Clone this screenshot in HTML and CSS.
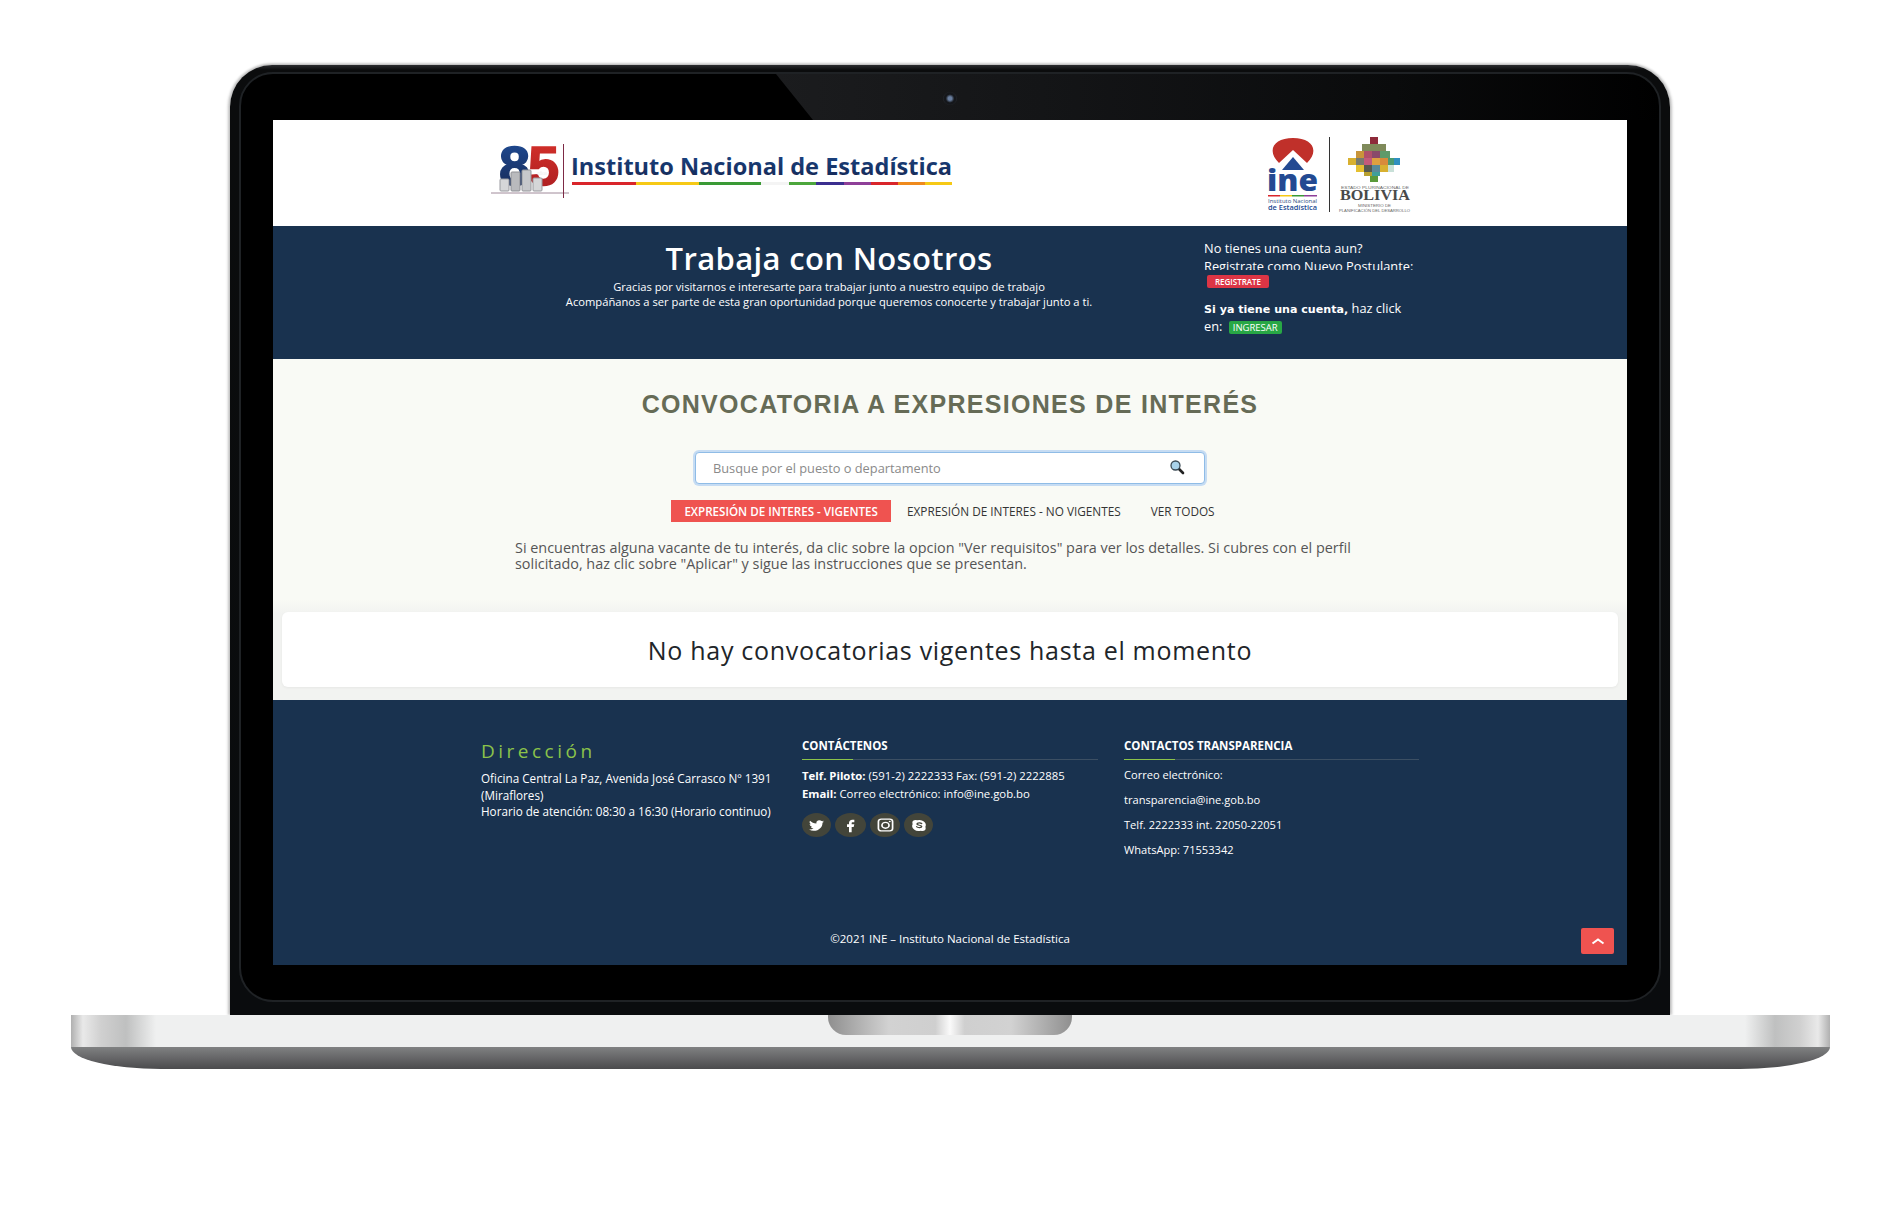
FILE: index.html
```html
<!DOCTYPE html>
<html lang="es">
<head>
<meta charset="utf-8">
<title>Trabaja con Nosotros</title>
<link rel="stylesheet" href="styles.css">
</head>
<body>
<div class="stage">
  <div class="laptop">
    <div class="lid">
      <div class="bezel-line"></div>
      <div class="glare"></div>
      <div class="camera"></div>
      <div class="screen">
        <header class="site-header">
          <svg class="logo-left" viewBox="485 126 475 94" width="475" height="94" aria-label="Instituto Nacional de Estadística">
            <defs>
              <linearGradient id="g8" x1="0" y1="0" x2="0" y2="1"><stop offset="0" stop-color="#1f4e9a"/><stop offset="1" stop-color="#17264f"/></linearGradient>
              <linearGradient id="g5" x1="0" y1="0" x2="0" y2="1"><stop offset="0" stop-color="#d8322b"/><stop offset="1" stop-color="#a81c20"/></linearGradient>
              <linearGradient id="gt" x1="0" y1="0" x2="0" y2="1"><stop offset="0" stop-color="#1b4a8c"/><stop offset="1" stop-color="#14244f"/></linearGradient>
            </defs>
            <text class="l85" x="499" y="185" fill="url(#g8)" stroke="url(#g8)">8</text>
            <text class="l85" x="528" y="185" fill="url(#g5)" stroke="url(#g5)">5</text>
            <text class="lanos" x="537" y="175">años</text>
            <rect x="500" y="179" width="9" height="12" rx="1" fill="#d5d6d8" stroke="#9a9ba0"/>
            <rect x="511" y="172" width="9" height="19" rx="1" fill="#b9babd" stroke="#8f9095"/>
            <rect x="522" y="170" width="9" height="21" rx="1" fill="#c7c8cb" stroke="#96979b"/>
            <rect x="533" y="178" width="9" height="13" rx="1" fill="#d5d6d8" stroke="#9a9ba0"/>
            <path d="M491 193H569" stroke="#a08a9a" stroke-width="1"/>
            <path d="M563.500 144V198" stroke="#7d2a45" stroke-width="1"/>
            <text class="lname" x="571" y="175" textLength="381" lengthAdjust="spacingAndGlyphs" fill="url(#gt)">Instituto Nacional de Estadística</text>
            <rect x="572" y="182" width="64" height="3" fill="#d9252a"/>
            <rect x="636" y="182" width="63" height="3" fill="#f6c915"/>
            <rect x="699" y="182" width="62" height="3" fill="#3a9a35"/>
            <rect x="761" y="182" width="28" height="3" fill="#f4f4f4"/>
            <rect x="789" y="182" width="27" height="3" fill="#4ca63c"/>
            <rect x="816" y="182" width="28" height="3" fill="#3b2f8f"/>
            <rect x="844" y="182" width="27" height="3" fill="#8e3f98"/>
            <rect x="871" y="182" width="27" height="3" fill="#d9252a"/>
            <rect x="898" y="182" width="27" height="3" fill="#ef8a1d"/>
            <rect x="925" y="182" width="27" height="3" fill="#f6c915"/>
          </svg>
          <svg class="logo-right" viewBox="1260 128 165 90" width="165" height="90" aria-label="INE, Estado Plurinacional de Bolivia">
            <path d="M1279 163C1266 150 1274 138 1293 138C1312 138 1320 150 1307 163L1293 150Z" fill="#c0302a"/>
            <path d="M1293 157L1304 170H1282Z" fill="#234a92"/>
            <text class="ine" x="1267" y="191" textLength="51" lengthAdjust="spacingAndGlyphs">ine</text>
            <rect x="1268" y="195" width="12" height="1.500" fill="#d9252a"/>
            <rect x="1280" y="195" width="12" height="1.500" fill="#f6c915"/>
            <rect x="1292" y="195" width="12" height="1.500" fill="#3a9a35"/>
            <rect x="1304" y="195" width="13" height="1.500" fill="#8e3f98"/>
            <text class="ine-sm" x="1268" y="203" textLength="49" lengthAdjust="spacingAndGlyphs">Instituto Nacional</text>
            <text class="ine-sm2" x="1268" y="210" textLength="49" lengthAdjust="spacingAndGlyphs">de Estadística</text>
            <path d="M1329.500 137V212" stroke="#333" stroke-width="1"/>
            <g>
              <rect x="1370" y="137" width="8" height="7" fill="#8e2a3a"/>
              <rect x="1362" y="144" width="24" height="7" fill="#7f8a5a"/>
              <rect x="1356" y="151" width="8" height="7" fill="#c9953a"/>
              <rect x="1364" y="151" width="8" height="7" fill="#b0506a"/>
              <rect x="1372" y="151" width="8" height="7" fill="#8a4a6a"/>
              <rect x="1380" y="151" width="10" height="7" fill="#5f9a6a"/>
              <rect x="1348" y="158" width="8" height="7" fill="#d8b030"/>
              <rect x="1356" y="158" width="8" height="7" fill="#777a70"/>
              <rect x="1364" y="158" width="8" height="7" fill="#c25a7a"/>
              <rect x="1372" y="158" width="8" height="7" fill="#e0a040"/>
              <rect x="1380" y="158" width="8" height="7" fill="#d88a3a"/>
              <rect x="1388" y="158" width="6" height="7" fill="#4a9a70"/>
              <rect x="1394" y="158" width="6" height="7" fill="#2f8fc0"/>
              <rect x="1356" y="165" width="8" height="7" fill="#e5c030"/>
              <rect x="1364" y="165" width="8" height="7" fill="#555a50"/>
              <rect x="1372" y="165" width="8" height="7" fill="#5a8a9a"/>
              <rect x="1380" y="165" width="8" height="7" fill="#d8b030"/>
              <rect x="1388" y="165" width="6" height="7" fill="#c8e0d8"/>
              <rect x="1364" y="172" width="8" height="4" fill="#b8a030"/>
              <rect x="1372" y="172" width="8" height="4" fill="#3f9f9a"/>
              <rect x="1370" y="176" width="8" height="6" fill="#5a9a3a"/>
            </g>
            <text class="bo-sm" x="1341" y="189" textLength="68" lengthAdjust="spacingAndGlyphs">ESTADO PLURINACIONAL DE</text>
            <text class="bo" x="1340" y="200" textLength="70" lengthAdjust="spacingAndGlyphs">BOLIVIA</text>
            <text class="bo-sm" x="1358" y="207" textLength="33" lengthAdjust="spacingAndGlyphs">MINISTERIO DE</text>
            <text class="bo-sm" x="1339" y="211.500" textLength="71" lengthAdjust="spacingAndGlyphs">PLANIFICACIÓN DEL DESARROLLO</text>
          </svg>
        </header>

        <section class="hero">
          <div class="hero-main">
            <h1 class="hero-title">Trabaja con Nosotros</h1>
            <p class="hero-sub">Gracias por visitarnos e interesarte para trabajar junto a nuestro equipo de trabajo</p>
            <p class="hero-sub">Acompáñanos a ser parte de esta gran oportunidad porque queremos conocerte y trabajar junto a ti.</p>
          </div>
          <div class="hero-side">
            <p class="side-line">No tienes una cuenta aun?</p>
            <p class="side-line side-cut">Registrate como Nuevo Postulante:</p>
            <a class="badge badge-red">REGISTRATE</a>
            <p class="side-line side-strong"><b>Si ya tiene una cuenta,</b> haz click</p>
            <p class="side-line side-en">en: <a class="badge badge-green">INGRESAR</a></p>
          </div>
        </section>

        <main class="content">
          <h2 class="page-title">CONVOCATORIA A EXPRESIONES DE INTERÉS</h2>
          <div class="search">
            <span class="search-ph">Busque por el puesto o departamento</span>
            <svg class="search-icon" viewBox="0 0 16 16" width="16" height="16" aria-hidden="true">
              <path d="M9.500 9.500L14 14" stroke="#222" stroke-width="2.600" stroke-linecap="round"/>
              <circle cx="6.500" cy="6.500" r="4.500" fill="#a9d2ea" stroke="#3b4a55" stroke-width="1.300"/>
            </svg>
          </div>
          <nav class="tabs">
            <a class="tab tab-active">EXPRESIÓN DE INTERES - VIGENTES</a>
            <a class="tab tab-second">EXPRESIÓN DE INTERES - NO VIGENTES</a>
            <a class="tab tab-third">VER TODOS</a>
          </nav>
          <p class="intro">Si encuentras alguna vacante de tu interés, da clic sobre la opcion "Ver requisitos" para ver los detalles. Si cubres con el perfil<br>solicitado, haz clic sobre "Aplicar" y sigue las instrucciones que se presentan.</p>
          <div class="notice">No hay convocatorias vigentes hasta el momento</div>
        </main>

        <footer class="site-footer">
          <div class="footer-grid">
            <div class="f-col">
              <h3 class="f-address-title">Dirección</h3>
              <p class="f-address">Oficina Central La Paz, Avenida José Carrasco Nº 1391<br>(Miraflores)<br>Horario de atención: 08:30 a 16:30 (Horario continuo)</p>
            </div>
            <div class="f-col">
              <h4 class="f-title">CONTÁCTENOS</h4>
              <p class="f-contact"><b>Telf. Piloto:</b> (591-2) 2222333 Fax: (591-2) 2222885</p>
              <p class="f-contact"><b>Email:</b> Correo electrónico: info@ine.gob.bo</p>
              <div class="social">
                <a class="soc"><svg viewBox="0 0 24 24" width="15" height="13" preserveAspectRatio="none"><path fill="#fff" d="M23.953 4.570a10 10 0 01-2.825.775 4.958 4.958 0 002.163-2.723c-.951.555-2.005.959-3.127 1.184a4.920 4.920 0 00-8.384 4.482C7.690 8.095 4.067 6.130 1.640 3.162a4.822 4.822 0 00-.666 2.475c0 1.710.870 3.213 2.188 4.096a4.904 4.904 0 01-2.228-.616v.060a4.923 4.923 0 003.946 4.827 4.996 4.996 0 01-2.212.085 4.936 4.936 0 004.604 3.417 9.867 9.867 0 01-6.102 2.105c-.390 0-.779-.023-1.170-.067a13.995 13.995 0 007.557 2.209c9.053 0 13.998-7.496 13.998-13.985 0-.210 0-.420-.015-.630A9.935 9.935 0 0024 4.590z"/></svg></a>
                <a class="soc soc-f"><svg viewBox="0 0 24 24" width="16" height="16" preserveAspectRatio="none"><path fill="#fff" d="M14 8h3V4h-3c-3 0-5 2-5 5v2H6v4h3v8h4v-8h3l1-4h-4V9c0-.600.400-1 1-1z"/></svg></a>
                <a class="soc soc-i"><svg viewBox="0 0 24 24" width="17" height="14" preserveAspectRatio="none"><rect x="2" y="2" width="20" height="20" rx="4" fill="none" stroke="#fff" stroke-width="2.400"/><circle cx="12" cy="12.500" r="5" fill="none" stroke="#fff" stroke-width="2.400"/><circle cx="18" cy="6" r="1.400" fill="#fff"/></svg></a>
                <a class="soc soc-s"><svg viewBox="0 0 24 24" width="16" height="13" preserveAspectRatio="none"><path fill="#fff" d="M7 2a5 5 0 00-5 5c0 .800.200 1.500.500 2.200A9.500 9.500 0 0015 21.500c.600.300 1.300.500 2 .500a5 5 0 005-5c0-.800-.200-1.500-.500-2.200A9.500 9.500 0 009.200 2.500 5 5 0 007 2z"/><path fill="none" stroke="#43453a" stroke-width="2.300" stroke-linecap="round" d="M16 8.500c-1-1.500-6.800-2-7 .800-.200 2.800 7 1.700 7 4.700 0 2.500-6 2.400-7.500.300"/></svg></a>
              </div>
            </div>
            <div class="f-col">
              <h4 class="f-title">CONTACTOS TRANSPARENCIA</h4>
              <p class="f-transp">Correo electrónico:</p>
              <p class="f-transp">transparencia@ine.gob.bo</p>
              <p class="f-transp">Telf. 2222333 int. 22050-22051</p>
              <p class="f-transp">WhatsApp: 71553342</p>
            </div>
          </div>
          <p class="copyright">©2021 INE – Instituto Nacional de Estadística</p>
          <a class="to-top"><svg viewBox="0 0 14 8" width="14" height="8"><path d="M1.500 6.500L7 2.500L12.500 6.500" fill="none" stroke="#fff" stroke-width="2"/></svg></a>
        </footer>
      </div>
    </div>
    <div class="base">
      <div class="notch"></div>
    </div>
  </div>
</div>
</body>
</html>
```
FILE: styles.css
```css
* { box-sizing: border-box; }
html, body { margin: 0; padding: 0; background: #fff; }
body { font-family: "Open Sans", "Liberation Sans", sans-serif; }
p, h1, h2, h3, h4 { margin: 0; }

.stage { width: 1895px; height: 1224px; padding: 65px 0 0 71px; overflow: hidden; background: #fff; }
.laptop { width: 1759px; display: flex; flex-direction: column; position: relative; }

/* lid */
.lid {
  position: relative;
  width: 1440px;
  height: 950px;
  margin-left: 159px;
  padding: 55px 43px 0;
  background: linear-gradient(180deg, #2b2d30 0, #0b0c0d 5px, #0a0c0e 100%);
  border-radius: 42px 42px 0 0;
  box-shadow: 0 -1px 3px #b5b5b5, -2px 0 3px #c8c8c8, 2px 0 3px #c8c8c8;
}
.bezel-line {
  position: absolute;
  left: 9px; right: 9px; top: 7px; bottom: 13px;
  border: 2px solid #1f2225;
  border-radius: 34px;
  background: #000;
}
.glare {
  position: absolute;
  z-index: 1;
  left: 546px; right: 10px; top: 9px; height: 46px;
  background: linear-gradient(90deg, #1b1c1e 0%, #141517 30%, #0a0b0c 70%, rgba(0,0,0,0) 100%);
  clip-path: polygon(0 0, 100% 0, 100% 100%, 37px 100%);
}
.camera {
  position: absolute;
  z-index: 2;
  left: 713px; top: 27px;
  width: 14px; height: 13px;
  border-radius: 50%;
  background: radial-gradient(circle, #6a7fa0 0 18%, #15171b 45%, #15171b 60%, #44474e 100%);
}
.screen {
  position: relative;
  z-index: 2;
  width: 1354px;
  height: 845px;
  display: flex;
  flex-direction: column;
  background: #fff;
}

/* header */
.site-header {
  height: 106px;
  flex: none;
  display: flex;
  align-items: center;
  justify-content: space-between;
  padding: 0 202px 0 212px;
  background: #fff;
}
.logo-left, .logo-right { display: block; }
.l85 { font-family: "Liberation Sans", sans-serif; font-weight: 700; font-size: 56px; stroke-width: 1.500px; }
.lanos { font-family: "Liberation Serif", serif; font-size: 5.500px; fill: #eee; }
.lname { font-family: "Open Sans", sans-serif; font-weight: 700; font-size: 24px; }
.ine { font-family: "Open Sans", sans-serif; font-weight: 800; font-size: 30px; fill: #234a92; }
.ine-sm { font-family: "Open Sans", sans-serif; font-size: 6px; fill: #2b4a80; }
.ine-sm2 { font-family: "Open Sans", sans-serif; font-size: 7.500px; font-weight: 600; fill: #234a92; }
.bo { font-family: "Liberation Serif", serif; font-weight: 700; font-size: 15px; fill: #4a4a4a; }
.bo-sm { font-family: "Liberation Sans", sans-serif; font-size: 4px; fill: #666; }

/* hero */
.hero {
  height: 133px;
  flex: none;
  display: flex;
  background: #19324f;
  color: #fff;
}
.hero-main { width: 750px; margin-left: 181px; padding-top: 12px; text-align: center; }
.hero-title { font-size: 31px; line-height: 40px; font-weight: 600; letter-spacing: .35px; }
.hero-sub { font-size: 11.200px; line-height: 15px; }
.hero-title + .hero-sub { margin-top: 1px; }
.hero-side { width: 240px; padding-top: 13px; font-size: 12.800px; }
.side-line { line-height: 18px; white-space: nowrap; }
.side-cut { height: 13px; margin-top: 0; overflow: hidden; }
.side-strong { margin-top: 11px; }
.side-strong b { font-family: "DejaVu Sans", sans-serif; font-size: 11.100px; }
.side-en { margin-top: -2px; }
.badge {
  display: inline-block;
  height: 13px;
  border-radius: 2px;
  color: #fff;
  font-size: 9px;
  line-height: 13px;
  overflow: hidden;
  vertical-align: middle;
}
.badge-red { display: block; width: 62px; margin: 5px 0 0 3px; background: #dc3545; font-weight: 600; font-size: 8px; text-align: center; }
.badge-green { width: 53px; margin-left: 3px; background: #28a745; text-align: center; font-size: 9.500px; }

/* content */
.content {
  flex: 1;
  display: flex;
  flex-direction: column;
  align-items: center;
  padding: 30px 9px 12px;
  background: linear-gradient(180deg, #f9faf5 0, #f9faf5 240px, #f2f3f1 254px, #f2f3f1 100%);
}
.page-title {
  font-family: "Liberation Sans", sans-serif;
  font-size: 25px;
  line-height: 30px;
  font-weight: 700;
  letter-spacing: 1.300px;
  color: #666b56;
}
.search {
  width: 510px;
  height: 32px;
  margin-top: 33px;
  padding: 0 19px 0 17px;
  display: flex;
  align-items: center;
  justify-content: space-between;
  background: #fff;
  border: 1px solid #8fbce6;
  border-radius: 4px;
  box-shadow: 0 0 0 2px #c6dcf3;
}
.search-ph { font-size: 12.800px; color: #8a8a8a; }
.search-icon { display: block; margin-top: -2px; }
.tabs { display: flex; align-items: stretch; margin-top: 16px; height: 22px; }
.tab {
  display: flex;
  align-items: center;
  color: #333;
  font-size: 11.800px;
  white-space: nowrap;
}
.tab-active { padding: 0 13px; background: #ef5350; color: #fff; font-weight: 600; font-size: 11.600px; }
.tab-second { padding-left: 16px; }
.tab-third { padding: 0 14px 0 30px; }
.intro {
  align-self: flex-start;
  margin: 18px 0 0 233px;
  font-size: 14.400px;
  line-height: 16px;
  color: #555;
  white-space: nowrap;
}
.notice {
  width: 1336px;
  height: 75px;
  margin-top: 40px;
  display: flex;
  align-items: center;
  justify-content: center;
  background: #fff;
  border-radius: 6px;
  box-shadow: 0 1px 3px rgba(0,0,0,.05);
  font-size: 25px;
  font-weight: 500;
  letter-spacing: .7px;
  color: #212529;
}

/* footer */
.site-footer {
  position: relative;
  height: 265px;
  flex: none;
  background: #19324f;
  color: #fff;
  padding: 38px 0 0 208px;
}
.footer-grid { display: grid; grid-template-columns: 295px 296px 295px; column-gap: 26px; height: 186px; }
.f-address-title { font-size: 19px; line-height: 26px; font-weight: 500; letter-spacing: 3.500px; color: #8bc34a; }
.f-address { margin-top: 6px; font-size: 11.700px; line-height: 16.500px; white-space: nowrap; }
.f-title {
  position: relative;
  padding-bottom: 6px;
  font-size: 11.500px;
  line-height: 15px;
  font-weight: 700;
  border-bottom: 1px solid #3c4f63;
}
.f-title::after {
  content: "";
  position: absolute;
  left: 0; bottom: -1px;
  width: 51px; height: 1px;
  background: #8bc34a;
}
.f-contact { font-size: 11.350px; line-height: 18px; white-space: nowrap; }
.f-title + .f-contact { margin-top: 7px; }
.social { display: flex; gap: 4px; margin-top: 10px; }
.soc {
  width: 29px; height: 24px;
  display: flex;
  align-items: center;
  justify-content: center;
  border-radius: 50%;
  background: #43453a;
}
.soc svg { display: block; }
.soc-f { width: 31px; }
.soc-i { width: 30px; }
.f-transp { font-size: 11.100px; line-height: 25px; white-space: nowrap; }
.f-title + .f-transp { margin-top: 2px; }
.copyright { margin-left: -208px; text-align: center; font-size: 11.500px; line-height: 16px; margin-top: 7px; }
.to-top {
  position: absolute;
  left: 1308px; top: 228px;
  width: 33px; height: 26px;
  display: flex;
  align-items: center;
  justify-content: center;
  background: #ef5350;
  border-radius: 2px;
}

/* base */
.base {
  position: relative;
  width: 1759px;
  height: 54px;
  flex: none;
  border-radius: 0 0 90px 90px / 0 0 22px 22px;
  background:
    linear-gradient(90deg, #b0b0b0 0, #e9e9e9 12px, #d0d0d0 30px, #bfc0c0 55px, #eff0f0 85px, #eff0f0 1674px, #bfc0c0 1704px, #d0d0d0 1729px, #e9e9e9 1747px, #b0b0b0 100%) top / 100% 32px no-repeat,
    linear-gradient(180deg, #808182 32px, #4b4b4d 54px);
}
.notch {
  position: absolute;
  left: 757px; top: 0;
  width: 244px; height: 20px;
  border-radius: 0 0 18px 18px;
  background: linear-gradient(90deg, #8f8f8f 0, #d2d2d2 25%, #cfcfcf 44%, #fafafa 50%, #cfcfcf 56%, #d2d2d2 75%, #8f8f8f 100%);
}
```
